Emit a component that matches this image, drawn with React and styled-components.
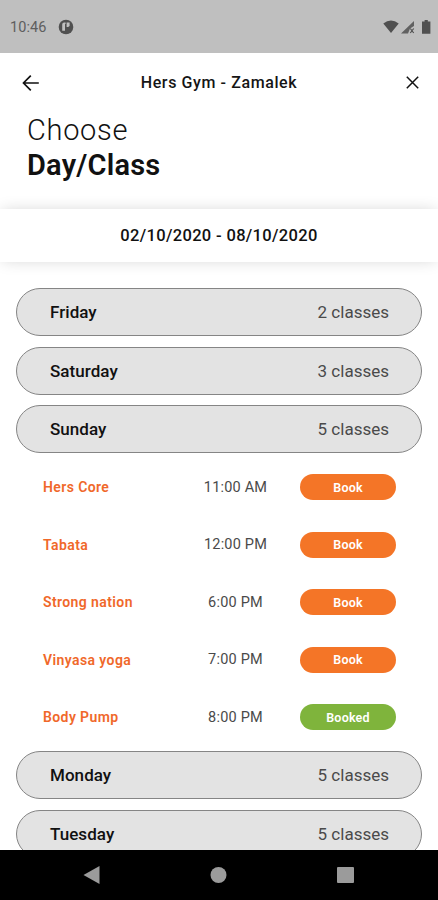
import styled, { createGlobalStyle } from "styled-components";

const GlobalStyle = createGlobalStyle`
  * {
    box-sizing: border-box;
  }

  body {
    margin: 0;
    background: #ffffff;
    font-family: Roboto, "Liberation Sans", sans-serif;
  }
`;

const Screen = styled.div`
  display: flex;
  flex-direction: column;
  width: 438px;
  height: 900px;
  overflow: hidden;
  background: #ffffff;
`;

const StatusBar = styled.div`
  display: flex;
  align-items: center;
  flex: none;
  height: 53px;
  padding: 1px 7px 0 10px;
  background: #bfbfbf;
  color: #5e5e5e;
`;

const Clock = styled.span`
  width: 48px;
  font-size: 14.5px;
  letter-spacing: 0.1px;
`;

const StatusIcons = styled.div`
  display: flex;
  align-items: center;
  margin-left: auto;
`;

const Header = styled.header`
  display: grid;
  grid-template-columns: 40px 1fr 40px;
  align-items: center;
  flex: none;
  height: 60px;
  padding: 0 18px 1px 22px;
`;

const HeaderTitle = styled.h1`
  margin: 0;
  padding-right: 4px;
  color: #151515;
  font-size: 16px;
  font-weight: 500;
  letter-spacing: 0.6px;
  text-align: center;
`;

const IconButton = styled.button`
  display: flex;
  justify-content: ${(props) => (props.$end ? "flex-end" : "flex-start")};
  padding: 0;
  border: none;
  background: none;
  color: #111111;
  cursor: pointer;
`;

const Heading = styled.h2`
  flex: none;
  height: 96px;
  margin: 0;
  padding-left: 27px;
  color: #111111;
  font-size: 29px;
  line-height: 35px;
`;

const HeadingLine = styled.span`
  display: block;
  font-weight: ${(props) => (props.$bold ? 600 : 300)};
  letter-spacing: ${(props) => (props.$bold ? "0.2px" : "0.7px")};
`;

const DateRange = styled.div`
  display: flex;
  align-items: center;
  justify-content: center;
  flex: none;
  height: 53px;
  background: #ffffff;
  box-shadow: 0 0 16px -2px rgba(0, 0, 0, 0.18);
  color: #111111;
  font-size: 16.5px;
  font-weight: 500;
  letter-spacing: 0.34px;
`;

const Schedule = styled.main`
  flex: 1;
  min-height: 0;
  padding: 26.2px 16px 0;
  overflow: hidden;
`;

const DayRow = styled.div`
  display: flex;
  align-items: center;
  justify-content: space-between;
  height: 48px;
  margin-bottom: 10.4px;
  padding: 0 32px 0 33px;
  border: 1px solid #858585;
  border-radius: 24px;
  background: #e3e3e3;
`;

const DayName = styled.span`
  color: #111111;
  font-size: 17px;
  font-weight: 500;
  letter-spacing: 0.05px;
`;

const ClassCount = styled.span`
  color: #4a4a4a;
  font-size: 17px;
`;

const ClassList = styled.div`
  margin: -4.6px 0 5.4px;
`;

const ClassRow = styled.div`
  display: grid;
  grid-template-columns: 130px 125px 97px;
  justify-content: start;
  align-items: center;
  height: 57.4px;
  padding-left: 27px;
`;

const ClassName = styled.span`
  color: #f0682a;
  font-size: 14px;
  font-weight: 600;
  letter-spacing: 0.4px;
`;

const ClassTime = styled.span`
  color: #4a4a4a;
  font-size: 14.5px;
  letter-spacing: 0.2px;
  text-align: center;
`;

const BookButton = styled.button`
  height: 26px;
  margin-left: 2px;
  width: 96px;
  padding: 0;
  border: none;
  border-radius: 13px;
  background: ${(props) => (props.$booked ? "#7fb43c" : "#f47527")};
  color: #ffffff;
  font-family: inherit;
  font-size: 12.5px;
  font-weight: 600;
  letter-spacing: 0.2px;
  cursor: pointer;
`;

const NavBar = styled.nav`
  display: flex;
  align-items: center;
  justify-content: space-between;
  flex: none;
  height: 50px;
  padding: 0 84px 0 82px;
  background: #000000;
  color: #9b9b9b;
`;

const days = [
  { name: "Friday", count: 2 },
  { name: "Saturday", count: 3 },
  {
    name: "Sunday",
    count: 5,
    classes: [
      { name: "Hers Core", time: "11:00 AM" },
      { name: "Tabata", time: "12:00 PM" },
      { name: "Strong nation", time: "6:00 PM" },
      { name: "Vinyasa yoga", time: "7:00 PM" },
      { name: "Body Pump", time: "8:00 PM", booked: true },
    ],
  },
  { name: "Monday", count: 5 },
  { name: "Tuesday", count: 5 },
];

const Day = ({ day }) => (
  <>
    <DayRow>
      <DayName>{day.name}</DayName>
      <ClassCount>{day.count} classes</ClassCount>
    </DayRow>
    {day.classes && (
      <ClassList>
        {day.classes.map((item) => (
          <ClassRow key={item.name}>
            <ClassName>{item.name}</ClassName>
            <ClassTime>{item.time}</ClassTime>
            <BookButton $booked={item.booked}>
              {item.booked ? "Booked" : "Book"}
            </BookButton>
          </ClassRow>
        ))}
      </ClassList>
    )}
  </>
);

const App = () => (
  <>
    <GlobalStyle />
    <Screen>
      <StatusBar>
        <Clock>10:46</Clock>
        <svg width="16" height="16" viewBox="0 0 16 16">
          <circle cx="8" cy="8" r="7.3" fill="#505050" />
          <path d="M4.2 11.8V5.6Q4.2 3.5 6.2 3.5H7.6V5H7V11.8Z" fill="#bfbfbf" />
          <path d="M8.6 3.5H11.6V6.2Q11.6 8 9.8 8H8.6Z" fill="#bfbfbf" />
        </svg>
        <StatusIcons>
          <svg width="48" height="16" viewBox="0 0 48 16" fill="#505050">
            <path d="M0.3 4.6Q8 -1.6 15.7 4.6L8 14Z" />
            <path d="M18 14.6L31 2V7L27 9.5L25 14.6Z" opacity="0.85" />
            <path d="M27.3 9.5L30.7 14M30.7 9.5L27.3 14" stroke="#505050" strokeWidth="1.2" />
            <path d="M39 2.4H41.6V1H44.8V2.4H47.4V14.8H39Z" />
          </svg>
        </StatusIcons>
      </StatusBar>
      <Header>
        <IconButton aria-label="Back">
          <svg width="18" height="18" viewBox="0 0 18 18" fill="none" stroke="currentColor" strokeWidth="1.7">
            <path d="M16.8 9H1.5M8.8 1.7L1.5 9L8.8 16.3" />
          </svg>
        </IconButton>
        <HeaderTitle>Hers Gym - Zamalek</HeaderTitle>
        <IconButton $end aria-label="Close">
          <svg width="15" height="15" viewBox="0 0 15 15" fill="none" stroke="currentColor" strokeWidth="1.5">
            <path d="M1.8 1.8L13.2 13.2M13.2 1.8L1.8 13.2" />
          </svg>
        </IconButton>
      </Header>
      <Heading>
        <HeadingLine>Choose</HeadingLine>
        <HeadingLine $bold>Day/Class</HeadingLine>
      </Heading>
      <DateRange>02/10/2020 - 08/10/2020</DateRange>
      <Schedule>
        {days.map((day) => (
          <Day key={day.name} day={day} />
        ))}
      </Schedule>
      <NavBar>
        <svg width="18" height="20" viewBox="0 0 18 20" fill="currentColor">
          <path d="M1.5 10L17.5 1V19Z" />
        </svg>
        <svg width="18" height="18" viewBox="0 0 18 18" fill="currentColor">
          <circle cx="9.5" cy="9" r="8" />
        </svg>
        <svg width="18" height="18" viewBox="0 0 18 18" fill="currentColor">
          <rect x="1" y="1" width="17" height="16" rx="1" />
        </svg>
      </NavBar>
    </Screen>
  </>
);

export default App;
